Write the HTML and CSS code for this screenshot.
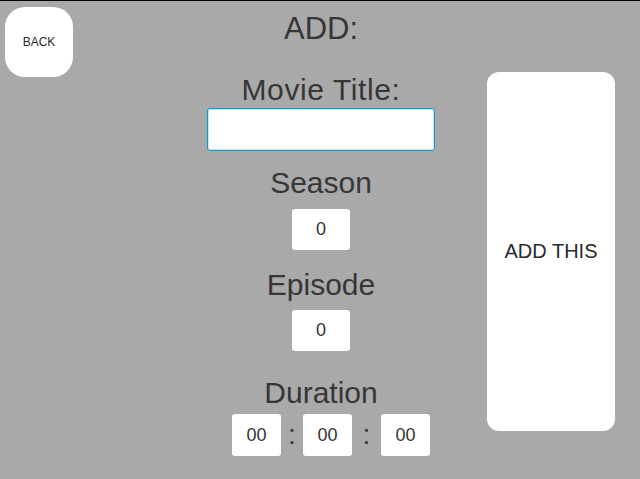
FILE: index.html
```html
<!DOCTYPE html>
<html>
<head>
<meta charset="utf-8">
<link rel="stylesheet" href="styles.css">
</head>
<body>
<div class="page">
  <div class="left">
    <button class="back">BACK</button>
  </div>
  <div class="middle">
    <div class="title">ADD:</div>
    <div class="label movie">Movie Title:</div>
    <input class="text-input" type="text">
    <div class="label season">Season</div>
    <div class="num-box first">0</div>
    <div class="label episode">Episode</div>
    <div class="num-box">0</div>
    <div class="label duration">Duration</div>
    <div class="time-row">
      <div class="time-box">00</div>
      <span class="colon c1">:</span>
      <div class="time-box">00</div>
      <span class="colon c2">:</span>
      <div class="time-box">00</div>
    </div>
  </div>
  <div class="right">
    <button class="add-this">ADD THIS</button>
  </div>
</div>
</body>
</html>
```
FILE: styles.css
```css
html, body {
  margin: 0;
  padding: 0;
  width: 640px;
  height: 479px;
  overflow: hidden;
}
body {
  background: #a9a9a9;
  border-top: 1px solid #000;
  box-sizing: border-box;
  font-family: "Liberation Sans", Arial, sans-serif;
  color: #363636;
}
.page {
  display: grid;
  grid-template-columns: 207px 228px 1fr;
  height: 478px;
}
.left {
  padding: 6px 0 0 5px;
}
.back {
  width: 68px;
  height: 70px;
  border: none;
  border-radius: 20px;
  background: #fff;
  font-family: "Liberation Sans", Arial, sans-serif;
  font-size: 12px;
  color: #2a2a2a;
  padding: 0;
}
.middle {
  display: flex;
  flex-direction: column;
  align-items: center;
}
.title {
  margin-top: 11px;
  font-size: 31px;
  line-height: 34px;
}
.label {
  font-size: 30px;
  line-height: 34px;
}
.movie {
  margin-top: 27px;
  letter-spacing: 0.6px;
}
.text-input {
  margin-top: 1px;
  width: 228px;
  height: 43px;
  box-sizing: border-box;
  border: 1px solid #1399d2;
  box-shadow: inset 0 0 0 1px #bfe8f7;
  border-radius: 3px;
  background: #fff;
  outline: none;
}
.season { margin-top: 15px; }
.episode { margin-top: 18px; }
.duration { margin-top: 25px; }
.num-box {
  margin-top: 8px;
  width: 58px;
  height: 41px;
  background: #fff;
  border-radius: 3px;
  display: flex;
  align-items: center;
  justify-content: center;
  font-size: 18px;
  color: #333;
}
.num-box.first { margin-top: 9px; }
.time-row {
  margin-top: 4px;
  display: flex;
  align-items: center;
  padding-left: 20px;
}
.time-box {
  width: 49px;
  height: 42px;
  background: #fff;
  border-radius: 3px;
  display: flex;
  align-items: center;
  justify-content: center;
  font-size: 18px;
  color: #333;
}
.colon {
  font-size: 28px;
  line-height: 42px;
  text-align: center;
}
.c1 { width: 22px; }
.c2 { width: 29px; }
.right {
  padding: 71px 0 0 52px;
}
.add-this {
  width: 128px;
  height: 359px;
  border: none;
  border-radius: 12px;
  background: #fff;
  font-family: "Liberation Sans", Arial, sans-serif;
  font-size: 20px;
  color: #2a2a2a;
  padding: 0;
}
```
